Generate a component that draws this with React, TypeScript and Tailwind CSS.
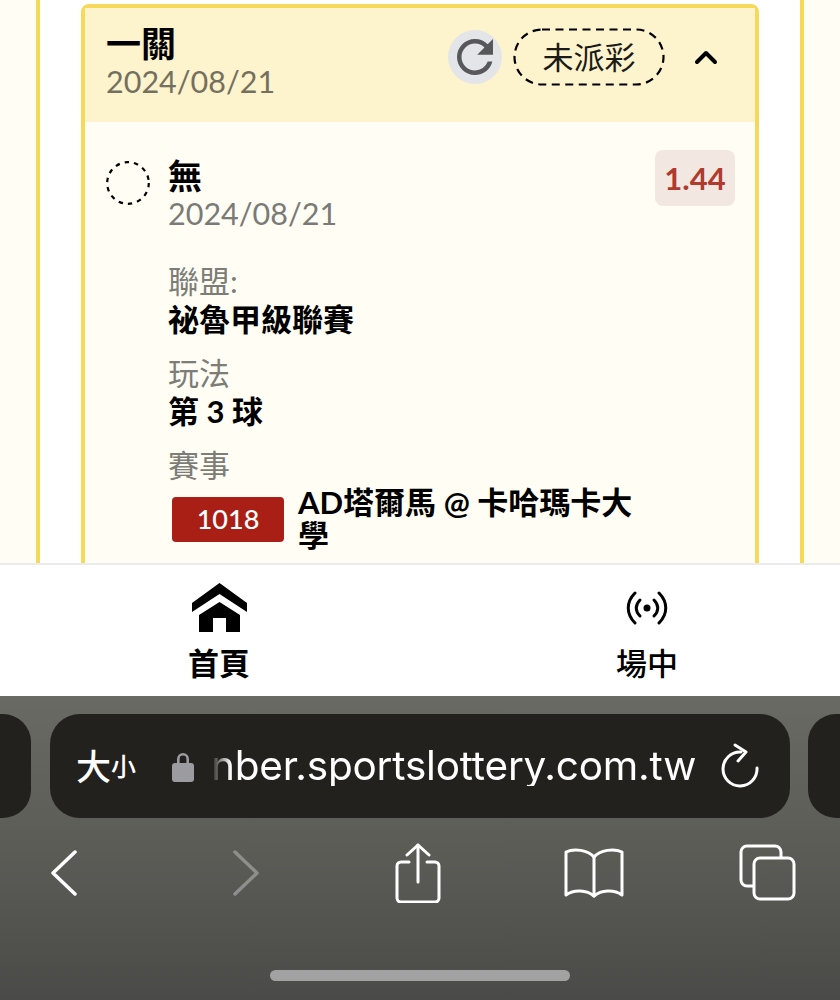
import { MdRefresh } from "react-icons/md";

const FONT = "font-['Lato','Noto_Sans_CJK_TC',sans-serif]";

const Field = ({ label, value }: { label: string; value: string }) => (
  <div className="mb-[16px]">
    <p className="text-[31px] leading-[38px] text-[#7d7d78]">{label}</p>
    <p className="text-[31px] leading-[38px] font-bold text-black">{value}</p>
  </div>
);

const HomeIcon = () => (
  <svg viewBox="0 0 55 49" className="h-[49px] w-[55px]" fill="#000">
    <path d="M27.5 0L55 20V29L27.5 11L0 29V20Z" />
    <path d="M27.5 19L48 32V49H34V35H21V49H7V32Z" />
  </svg>
);

const BroadcastIcon = () => (
  <svg viewBox="0 0 42 34" className="h-[34px] w-[42px]" fill="none" stroke="#000" strokeWidth="3" strokeLinecap="round">
    <path d="M9 2C0 11 0 23 9 32" />
    <path d="M33 2C42 11 42 23 33 32" />
    <path d="M14 9C9 14 9 20 14 25" />
    <path d="M28 9C33 14 33 20 28 25" />
    <circle cx="21" cy="17" r="3.5" fill="#000" stroke="none" />
  </svg>
);

const ToolbarCell = ({ ml, children }: { ml: string; children: React.ReactNode }) => (
  <div className={`flex h-[62px] w-[60px] items-center justify-center ${ml}`}>{children}</div>
);

export default function App() {
  return (
    <div className={`flex h-[1000px] w-[840px] flex-col overflow-hidden ${FONT}`}>
      <div className="h-[563px] shrink-0 overflow-hidden bg-[#fffdf4] px-[36px]">
        <div className="h-full border-x-4 border-[#f7d95a] bg-white px-[41px] pt-[4px]">
          <div className="rounded-lg border-4 border-[#f7d95a] bg-[#fffdf4]">
            <div className="flex h-[114px] items-start justify-between bg-[#fdf3cc] pl-[21px] pr-[37px]">
              <div className="pt-[15px]">
                <p className="text-[35px] leading-[41px] font-bold text-black">一關</p>
                <p className="mt-[-2px] text-[30.5px] leading-[38px] text-[#74705f]">2024/08/21</p>
              </div>
              <div className="flex items-center pt-[20px]">
                <div className="flex h-[54px] w-[54px] items-center justify-center rounded-full bg-[#e3e5e8]">
                  <MdRefresh className="h-[54px] w-[54px] text-[#58585a]" />
                </div>
                <div className="relative ml-[11px] flex h-[58px] w-[152px] items-center justify-center text-[31px] text-[#1a1a18]">
                  <svg viewBox="0 0 152 58" className="absolute inset-0 h-full w-full" fill="none" stroke="#000" strokeWidth="2.2" strokeDasharray="8 5.5">
                    <rect x="1.5" y="1.5" width="149" height="55" rx="27.5" />
                  </svg>
                  未派彩
                </div>
                <svg viewBox="0 0 24 16" className="ml-[29px] h-[16px] w-[24px]" fill="none" stroke="#000" strokeWidth="4" strokeLinecap="round" strokeLinejoin="round">
                  <path d="M3 13L12 4L21 13" />
                </svg>
              </div>
            </div>

            <div className="flex items-start justify-between pb-[40px] pl-[21px] pr-[20px] pt-[28px]">
              <div className="flex min-w-0 flex-1 items-start">
                <svg viewBox="0 0 44 44" className="mt-[11px] h-[44px] w-[44px] shrink-0" fill="none" stroke="#000" strokeWidth="2.2" strokeDasharray="4.4 5">
                  <circle cx="22" cy="22" r="20.8" />
                </svg>
                <div className="ml-[18px] mt-[7px] min-w-0 flex-1">
                  <p className="text-[34px] leading-[38px] font-bold text-black">無</p>
                  <p className="mt-[-1px] text-[30.5px] leading-[38px] text-[#7a7a76]">2024/08/21</p>
                  <div className="mt-[30px]">
                    <Field label="聯盟:" value="祕魯甲級聯賽" />
                    <Field label="玩法" value="第 3 球" />
                    <p className="text-[31px] leading-[38px] text-[#7d7d78]">賽事</p>
                    <div className="mt-[2px] flex items-center">
                      <span className="ml-[4px] flex h-[45px] w-[112px] shrink-0 items-center justify-center rounded-[4px] bg-[#a91f16] text-[27px] font-medium text-white">
                        1018
                      </span>
                      <p className="ml-[14px] w-[340px] text-[31px] leading-[33px] font-bold text-black">
                        AD塔爾馬 @ 卡哈瑪卡大學
                      </p>
                    </div>
                  </div>
                </div>
              </div>
              <span className="flex h-[56px] w-[80px] shrink-0 items-center justify-center rounded-lg bg-[#f3e7e1] text-[31px] font-bold text-[#b03a2e]">
                1.44
              </span>
            </div>
          </div>
        </div>
      </div>

      <div className="flex h-[133px] shrink-0 border-t-2 border-[#ebebeb] bg-white">
        <div className="flex w-[438px] shrink-0 flex-col items-center pt-[18px]">
          <HomeIcon />
          <span className="mt-[12px] text-[31px] leading-[38px] font-bold text-black">首頁</span>
        </div>
        <div className="flex w-[402px] shrink-0 flex-col items-center pl-[16px] pt-[26px]">
          <BroadcastIcon />
          <span className="mt-[19px] text-[31px] leading-[38px] font-medium text-black">場中</span>
        </div>
      </div>

      <div className="flex flex-1 flex-col bg-gradient-to-b from-[#6a6a65] via-[#5c5c57] to-[#4a4a48] pt-[18px]">
        <div className="flex h-[104px] shrink-0">
          <div className="w-[31px] rounded-r-[28px] bg-[#22211d]" />
          <div className="ml-[19px] flex w-[741px] items-center rounded-[30px] bg-[#22211d] pl-[26px] text-white">
            <span className="text-[35px] leading-none font-medium">大</span>
            <span className="text-[25px] leading-none font-medium">小</span>
            <svg viewBox="0 0 22 32" className="ml-[36px] h-[32px] w-[22px]" fill="#9c9ca0">
              <path d="M5 14V9a6 6 0 0 1 12 0v5h-2.6V9a3.4 3.4 0 0 0-6.8 0v5z" />
              <rect x="0" y="13" width="22" height="19" rx="3" />
            </svg>
            <span className="ml-[17px] font-['Inter',sans-serif] text-[40.5px] leading-none tracking-[-0.2px] [mask-image:linear-gradient(90deg,transparent,#000_20px)]">
              nber.sportslottery.com.tw
            </span>
            <svg viewBox="0 0 40 46" className="ml-[24px] h-[46px] w-[40px]" fill="none" stroke="#fff" strokeWidth="3" strokeLinecap="round" strokeLinejoin="round">
              <path d="M21 9A17 17 0 1 0 37 25" />
              <path d="M15 2L26 9L18 18" />
            </svg>
          </div>
          <div className="ml-[18px] w-[32px] rounded-l-[28px] bg-[#22211d]" />
        </div>

        <div className="mt-[24px] flex items-center">
          <ToolbarCell ml="ml-[34px]">
            <svg viewBox="0 0 28 46" className="h-[46px] w-[28px]" fill="none" stroke="#fff" strokeWidth="3.5" strokeLinecap="round" strokeLinejoin="round">
              <path d="M25 2L3 23L25 44" />
            </svg>
          </ToolbarCell>
          <ToolbarCell ml="ml-[122px]">
            <svg viewBox="0 0 28 46" className="h-[46px] w-[28px]" fill="none" stroke="#8e8e8c" strokeWidth="3.5" strokeLinecap="round" strokeLinejoin="round">
              <path d="M3 2L25 23L3 44" />
            </svg>
          </ToolbarCell>
          <ToolbarCell ml="ml-[112px]">
            <svg viewBox="0 0 46 60" className="h-[60px] w-[46px]" fill="none" stroke="#fff" strokeWidth="3" strokeLinecap="round" strokeLinejoin="round">
              <path d="M14 19H6a4 4 0 0 0-4 4v32a4 4 0 0 0 4 4h34a4 4 0 0 0 4-4V23a4 4 0 0 0-4-4h-8" />
              <path d="M23 39V2" />
              <path d="M12 12L23 2L34 12" />
            </svg>
          </ToolbarCell>
          <ToolbarCell ml="ml-[116px]">
            <svg viewBox="0 0 60 50" className="h-[50px] w-[60px]" fill="none" stroke="#fff" strokeWidth="3" strokeLinecap="round" strokeLinejoin="round">
              <path d="M30 9C24 2 10 0 2 4V47C10 41 23 42 30 48C37 42 50 41 58 47V4C50 0 36 2 30 9Z" />
              <path d="M30 9V48" />
            </svg>
          </ToolbarCell>
          <ToolbarCell ml="ml-[114px]">
            <svg viewBox="0 0 58 58" className="h-[58px] w-[58px]" fill="none" stroke="#fff" strokeWidth="3" strokeLinejoin="round">
              <path d="M14 42H8a6 6 0 0 1-6-6V8a6 6 0 0 1 6-6h28a6 6 0 0 1 6 6v6" />
              <rect x="15" y="14" width="40" height="41" rx="6" />
            </svg>
          </ToolbarCell>
        </div>

        <div className="mx-auto mt-[66px] h-[11px] w-[300px] rounded-full bg-[#a2a2a2]" />
      </div>
    </div>
  );
}
